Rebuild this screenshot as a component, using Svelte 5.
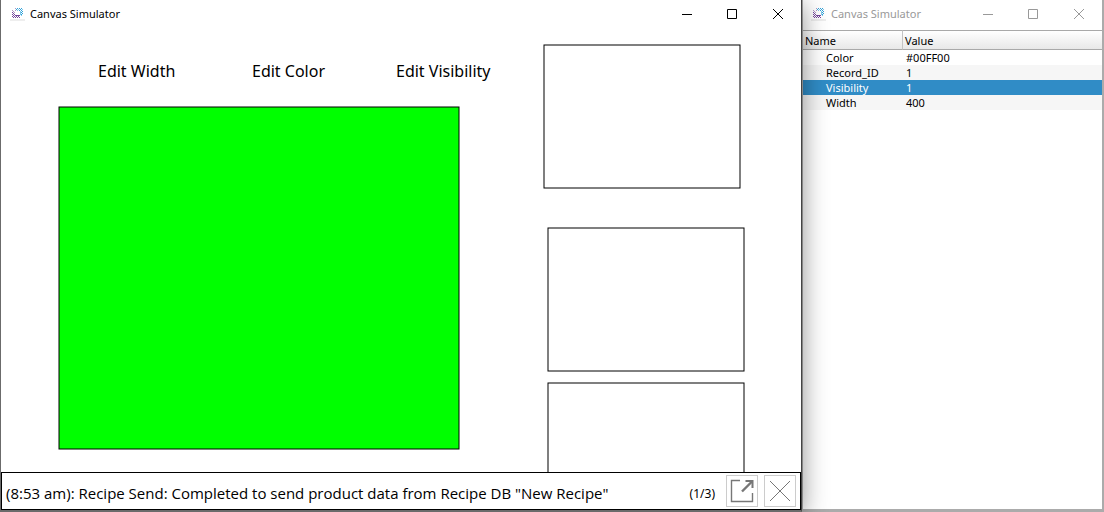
<script>
  const actions = [
    { label: "Edit Width", x: 97, y: 30 },
    { label: "Edit Color", x: 251, y: 30 },
    { label: "Edit Visibility", x: 395, y: 30 },
  ];

  const shapes = [
    { x: 58, y: 77, width: 400, height: 342, fill: "#00ff00" },
    { x: 543, y: 15, width: 196, height: 143, fill: "#ffffff" },
    { x: 547, y: 198, width: 196, height: 143, fill: "#ffffff" },
    { x: 547, y: 353, width: 196, height: 143, fill: "#ffffff" },
  ];

  const records = [
    { name: "Color", value: "#00FF00" },
    { name: "Record_ID", value: "1" },
    { name: "Visibility", value: "1" },
    { name: "Width", value: "400" },
  ];

  let selected = $state("Visibility");

  // b = blue, c = light blue, p = purple, q = light purple
  const logo = [
    "...q.b.b.b.",
    "....b.c.b.c",
    "q..q.c.b.b.",
    ".q......c.b",
    "p.q.....cb.",
    ".p......c.b",
    "p.p.....cb.",
    ".p.ppppp.c.",
    "p.p.p.p....",
    ".p.p.p.p...",
  ];
  const inks = { b: "#2fa0d8", c: "#7cc9ec", p: "#75489c", q: "#b096c4" };
  const pixels = logo.flatMap((row, y) =>
    [...row].map((ink, x) => ({ x, y, ink })).filter((p) => p.ink !== "."),
  );
</script>

{#snippet titleBar()}
  <header class="title-bar">
    <svg class="logo" width="16" height="14" viewBox="-2 -1 16 14" shape-rendering="crispEdges">
      <rect x="-2" y="11" width="15" height="2" fill="#eeeeee" />
      {#each pixels as p}
        <rect x={p.x} y={p.y} width="1" height="1" fill={inks[p.ink]} />
      {/each}
    </svg>
    <h1>Canvas Simulator</h1>
    <button aria-label="Minimize">
      <svg width="11" height="11" viewBox="0 0 11 11"><path d="M1 5.5H11" /></svg>
    </button>
    <button aria-label="Maximize">
      <svg width="11" height="11" viewBox="0 0 11 11"><path d="M.5 .5H9.5V9.5H.5Z" /></svg>
    </button>
    <button aria-label="Close">
      <svg width="11" height="11" viewBox="0 0 11 11"><path d="M0 0L10 10M10 0L0 10" /></svg>
    </button>
  </header>
{/snippet}

<main>
  <section class="window front">
    {@render titleBar()}
    <div class="canvas">
      <svg class="shapes">
        {#each shapes as s}
          <rect x={s.x} y={s.y} width={s.width} height={s.height} fill={s.fill} stroke="#000000" />
        {/each}
      </svg>
      {#each actions as action}
        <button style="left: {action.x}px; top: {action.y}px">{action.label}</button>
      {/each}
    </div>
    <footer>
      <p>(8:53 am): Recipe Send: Completed to send product data from Recipe DB "New Recipe"</p>
      <span class="count">(1/3)</span>
      <button aria-label="Open message">
        <svg width="30" height="30" viewBox="0 0 30 30">
          <path d="M13 4.5H4.5V25.5H25.5V17" stroke-width="1.4" />
          <path d="M15 15.5L25 5.5" stroke-width="2.4" />
          <path d="M18.5 5H25.5V12" stroke-width="2" />
        </svg>
      </button>
      <button aria-label="Dismiss message">
        <svg width="30" height="30" viewBox="0 0 30 30">
          <path d="M5 5L25 25M25 5L5 25" />
        </svg>
      </button>
    </footer>
  </section>

  <section class="window back">
    {@render titleBar()}
    <table>
      <thead>
        <tr>
          <th>Name</th>
          <th>Value</th>
        </tr>
      </thead>
      <tbody>
        {#each records as record}
          <tr class:selected={record.name === selected} onclick={() => (selected = record.name)}>
            <td>{record.name}</td>
            <td>{record.value}</td>
          </tr>
        {/each}
      </tbody>
    </table>
  </section>
</main>

<style>
  :global(body) {
    margin: 0;
    background: #ababab;
  }

  main {
    display: grid;
    grid-template-columns: 802fr 302fr;
    min-height: 100vh;
    font-family: "Noto Sans", "Open Sans", sans-serif;
    font-size: 12px;
    color: #000;
  }

  button {
    padding: 0;
    border: 0;
    background: none;
    font: inherit;
    color: inherit;
  }

  svg {
    display: block;
    fill: none;
    stroke-width: 1;
  }

  .window {
    display: flex;
    flex-direction: column;
    box-sizing: border-box;
    min-width: 0;
    background: #fff;
  }

  .front {
    position: relative;
    z-index: 1;
    border: solid #6b6b6b;
    border-width: 0 1px 2px;
    border-right-color: #444;
    box-shadow: 0 4px 24px rgba(0, 0, 0, 0.45);
  }

  .back {
    border: solid #ababab;
    border-width: 0 2px 3px 1px;
  }

  .title-bar {
    display: flex;
    align-items: center;
    box-sizing: border-box;
    height: 30px;
    padding: 0 0 2px 9px;
  }

  .title-bar h1 {
    flex: 1;
    margin: 0 0 0 4px;
    font-size: 11px;
    font-weight: 400;
    line-height: 28px;
    white-space: nowrap;
  }

  .title-bar button {
    display: grid;
    place-items: center;
    width: 46px;
    height: 28px;
    stroke: #000;
  }

  .title-bar .logo {
    stroke: none;
  }

  .back .title-bar {
    padding-left: 8px;
    color: #999;
  }

  .back .title-bar button {
    stroke: #999;
  }

  .canvas {
    position: relative;
    flex: 1;
    min-height: 440px;
    overflow: hidden;
  }

  .shapes {
    position: absolute;
    width: 100%;
    height: 100%;
  }

  .canvas button {
    position: absolute;
    font-size: 16px;
    line-height: 22px;
    white-space: nowrap;
  }

  footer {
    display: flex;
    align-items: center;
    gap: 6px;
    box-sizing: border-box;
    height: 38px;
    padding: 0 4px;
    border: 1px solid #000;
    background: #fff;
  }

  footer p {
    flex: 1;
    margin: 4px 0 0;
    font-family: "Open Sans", "Noto Sans", sans-serif;
    font-size: 15px;
    white-space: nowrap;
  }

  .count {
    margin: 4px 5px 0 0;
  }

  footer button {
    border: 1px solid #ccc;
    stroke: #777;
  }

  table {
    width: 100%;
    border-collapse: separate;
    border-spacing: 0;
    table-layout: fixed;
    font-size: 11px;
    line-height: 15px;
  }

  th {
    box-sizing: border-box;
    height: 20px;
    padding: 0 2px;
    border: solid #a9a9a9;
    border-width: 1px 0;
    background: linear-gradient(#fff, #e8e8e8);
    font-weight: 400;
    text-align: left;
  }

  th:first-child {
    width: 100px;
    border-right: 1px solid #c4c4c4;
  }

  td {
    height: 15px;
    padding: 0 3px;
  }

  td:first-child {
    padding-left: 23px;
  }

  tbody tr:nth-child(even) {
    background: #f6f6f6;
  }

  tbody tr.selected {
    background: #308cc6;
    color: #fff;
  }
</style>
